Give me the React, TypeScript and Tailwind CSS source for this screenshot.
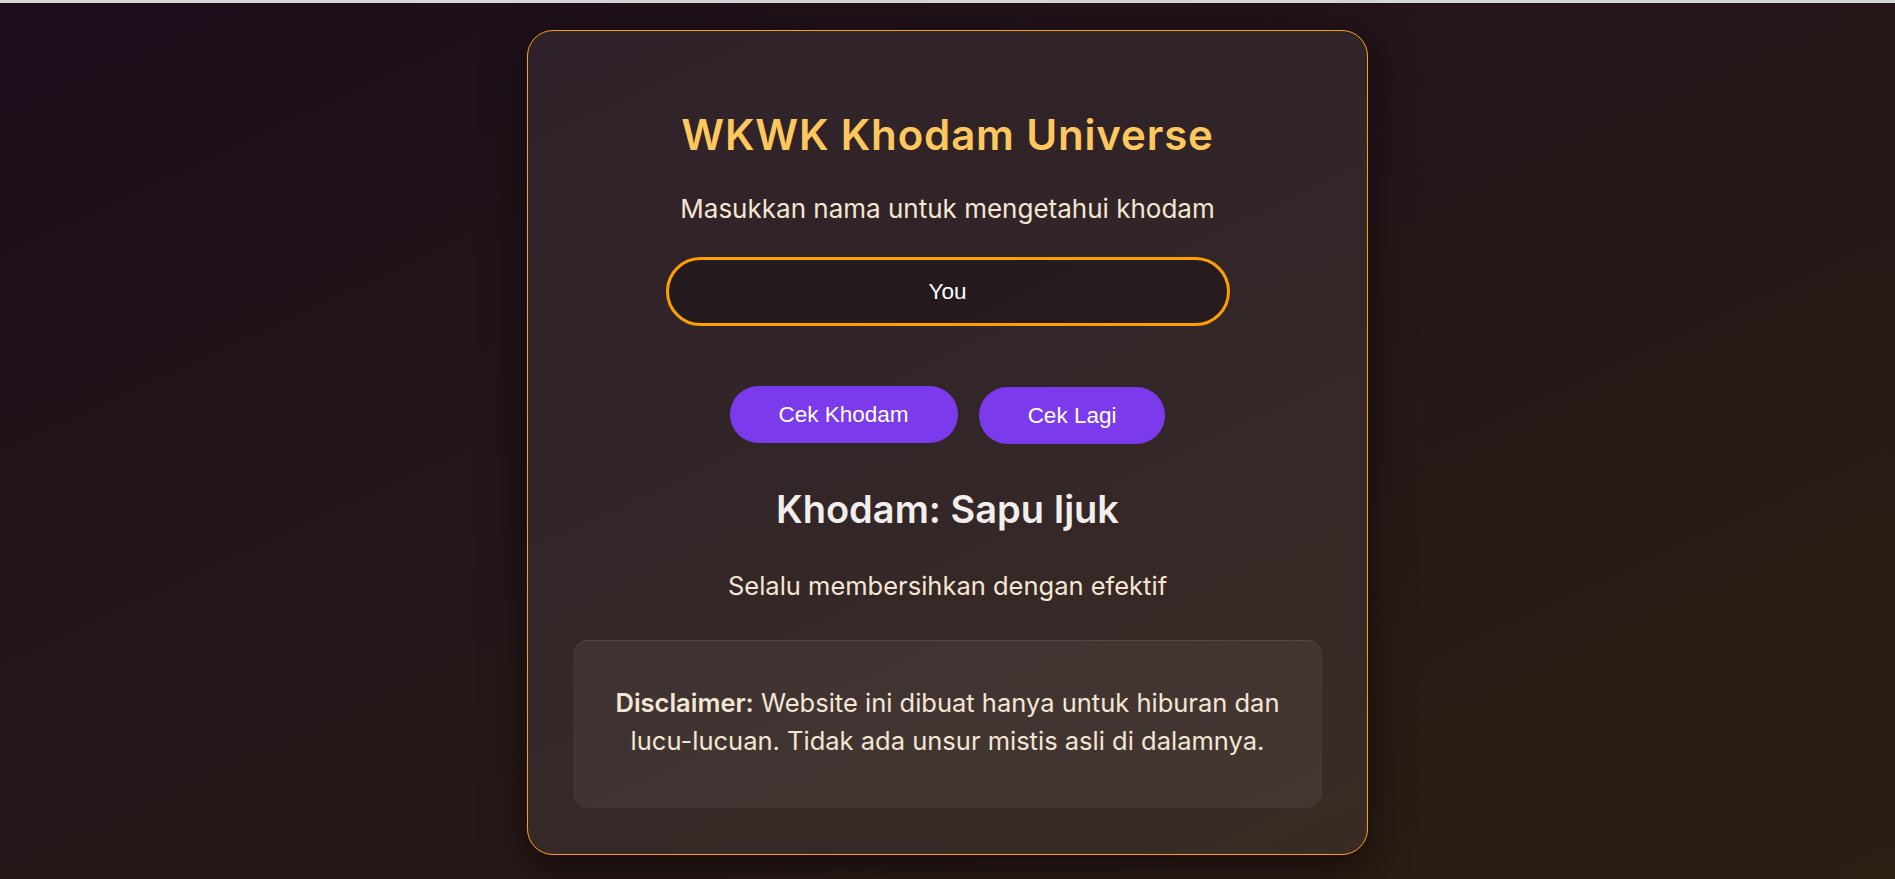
import { useState } from "react";

const khodamList = [
  { name: "Sapu Ijuk", desc: "Selalu membersihkan dengan efektif" },
  { name: "Kucing Oren", desc: "Suka rebahan dan minta makan" },
  { name: "Tutup Panci", desc: "Selalu menemukan pasangannya" },
];

export default function App() {
  const [name, setName] = useState("You");
  const [idx, setIdx] = useState(0);
  const khodam = khodamList[idx];

  return (
    <div className="min-h-screen flex flex-col font-['Inter',sans-serif]">
      <div className="h-[3px] bg-[#d6d6d6]" />
      <main className="flex-1 flex justify-center pt-[27px] pb-[25px] bg-linear-to-br from-[#1c0e1b] to-[#2d1e12]">
        <div className="w-[841px] rounded-[26px] border border-[#ff9f0a] bg-white/[0.07] shadow-[0_12px_40px_rgba(0,0,0,0.55)] px-[45px] pt-[78px] pb-[46px] flex flex-col items-center text-center">
          <h1 className="text-[42px] leading-[52px] font-semibold tracking-[0.02em] text-[#ffc85f]">
            WKWK Khodam Universe
          </h1>
          <p className="mt-[30px] text-[26px] leading-[36px] text-[#f5e6d3]">
            Masukkan nama untuk mengetahui khodam
          </p>

          <input
            value={name}
            onChange={(e) => setName(e.target.value)}
            className="mt-[30px] w-[564px] h-[69px] rounded-full border-[3px] border-[#ffa000] bg-black/25 text-center text-[22.5px] text-white outline-none font-['Liberation_Sans',Arial,sans-serif]"
          />

          <div className="mt-[60px] flex items-start gap-[21px] font-['Liberation_Sans',Arial,sans-serif]">
            <button
              onClick={() => setIdx((idx + 1) % khodamList.length)}
              className="rounded-full bg-[#7c3aed] px-[49px] py-[15px] text-[22.5px] leading-[27px] text-white"
            >
              Cek Khodam
            </button>
            <button
              onClick={() => setIdx(0)}
              className="mt-px rounded-full bg-[#7c3aed] px-[49px] py-[15px] text-[22.5px] leading-[27px] text-white"
            >
              Cek Lagi
            </button>
          </div>

          <h2 className="mt-[42px] text-[38px] leading-[46px] font-semibold text-[#f1eeec]">
            Khodam: {khodam.name}
          </h2>
          <p className="mt-[36px] text-[25.5px] leading-[36px] text-[#f5e6d3]">
            {khodam.desc}
          </p>

          <div className="mt-[36px] w-full rounded-[15px] border-t border-white/10 bg-white/[0.06] pt-[43px] pb-[48px] text-[25.5px] leading-[38px] text-[#f5e6d3]">
            <strong className="font-semibold">Disclaimer:</strong> Website ini dibuat hanya untuk hiburan dan
            <br />
            lucu-lucuan. Tidak ada unsur mistis asli di dalamnya.
          </div>
        </div>
      </main>
    </div>
  );
}
